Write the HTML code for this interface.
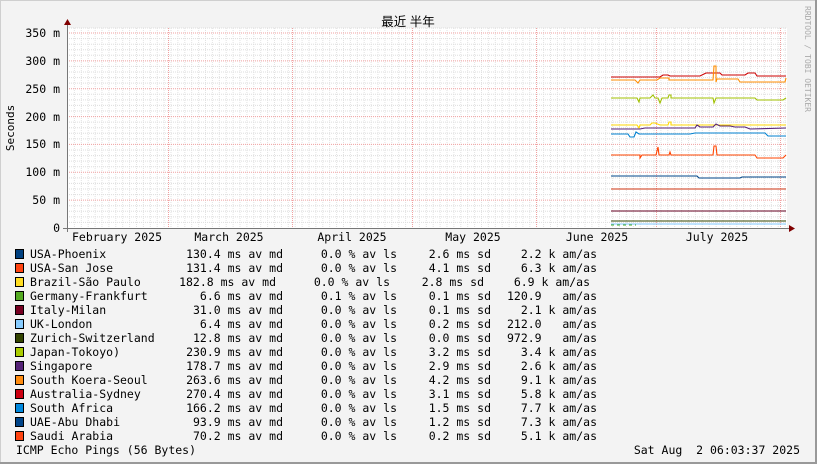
<!DOCTYPE html>
<html><head><meta charset="utf-8"><style>
html,body{margin:0;padding:0;background:#f3f3f3}
svg{display:block}
text{font-family:"DejaVu Sans Mono","Liberation Mono",monospace;font-size:11.5px;fill:#000}
</style></head><body>
<svg width="817" height="464" xmlns="http://www.w3.org/2000/svg">
<defs>
<pattern id="vg" x="67" y="0" width="6.9" height="464" patternUnits="userSpaceOnUse"><line x1="0.5" y1="0" x2="0.5" y2="464" stroke="#e2e2e2" stroke-width="1" stroke-dasharray="1,1"/></pattern>
</defs>
<rect x="0" y="0" width="817" height="464" fill="#f3f3f3"/>
<rect x="0.5" y="0.5" width="816" height="463" fill="none" stroke="#cfcfcf"/>
<line x1="816" y1="0" x2="816" y2="464" stroke="#999" stroke-width="2"/>
<line x1="0" y1="463" x2="817" y2="463" stroke="#999" stroke-width="2"/>
<rect x="67" y="28" width="720" height="200" fill="#fff"/>
<rect x="67" y="28" width="720" height="200" fill="url(#vg)"/>
<g stroke="#ddd" stroke-dasharray="1,1">
<line x1="67" y1="222.4" x2="787" y2="222.4"/><line x1="67" y1="216.9" x2="787" y2="216.9"/><line x1="67" y1="211.3" x2="787" y2="211.3"/><line x1="67" y1="205.7" x2="787" y2="205.7"/>
<line x1="67" y1="194.6" x2="787" y2="194.6"/><line x1="67" y1="189" x2="787" y2="189"/><line x1="67" y1="183.4" x2="787" y2="183.4"/><line x1="67" y1="177.9" x2="787" y2="177.9"/>
<line x1="67" y1="166.7" x2="787" y2="166.7"/><line x1="67" y1="161.1" x2="787" y2="161.1"/><line x1="67" y1="155.6" x2="787" y2="155.6"/><line x1="67" y1="150" x2="787" y2="150"/>
<line x1="67" y1="138.9" x2="787" y2="138.9"/><line x1="67" y1="133.3" x2="787" y2="133.3"/><line x1="67" y1="127.7" x2="787" y2="127.7"/><line x1="67" y1="122.1" x2="787" y2="122.1"/>
<line x1="67" y1="111" x2="787" y2="111"/><line x1="67" y1="105.4" x2="787" y2="105.4"/><line x1="67" y1="99.9" x2="787" y2="99.9"/><line x1="67" y1="94.3" x2="787" y2="94.3"/>
<line x1="67" y1="83.1" x2="787" y2="83.1"/><line x1="67" y1="77.6" x2="787" y2="77.6"/><line x1="67" y1="72" x2="787" y2="72"/><line x1="67" y1="66.4" x2="787" y2="66.4"/>
<line x1="67" y1="55.3" x2="787" y2="55.3"/><line x1="67" y1="49.7" x2="787" y2="49.7"/><line x1="67" y1="44.2" x2="787" y2="44.2"/><line x1="67" y1="38.6" x2="787" y2="38.6"/>
<line x1="67" y1="28" x2="787" y2="28"/>
</g>
<g stroke="#f0a0a0" stroke-dasharray="1,1">
<line x1="67" y1="200.1" x2="787" y2="200.1"/><line x1="67" y1="172.3" x2="787" y2="172.3"/><line x1="67" y1="144.4" x2="787" y2="144.4"/><line x1="67" y1="116.6" x2="787" y2="116.6"/><line x1="67" y1="88.7" x2="787" y2="88.7"/><line x1="67" y1="60.9" x2="787" y2="60.9"/><line x1="67" y1="33" x2="787" y2="33"/>
<line x1="168.5" y1="28" x2="168.5" y2="228"/><line x1="292.5" y1="28" x2="292.5" y2="228"/><line x1="412.5" y1="28" x2="412.5" y2="228"/><line x1="536.5" y1="28" x2="536.5" y2="228"/><line x1="656.5" y1="28" x2="656.5" y2="228"/><line x1="780.5" y1="28" x2="780.5" y2="228"/>
</g>
<g fill="none" stroke-width="1.1">
<polyline stroke="#cc0000" points="611,77 660,77 663,75 668,75 670,76 700,76 706,73 720,73 722,75 745,75 748,73 755,73 757,76 786,76"/>
<polyline stroke="#ff8c00" points="611,80 635,80 638,83 640,80 657,80 660,78 669,78 669,80 713,80 714,66 716,66 716,82 717,79 738,79 740,82 785,82 786,78"/>
<polyline stroke="#a0c000" points="611,98 637,98 639,102 640,98 650,98 653,95 655,98 658,98 660,103 662,98 668,98 669,95 671,95 671,98 713,98 714,103 716,98 755,98 757,100 783,100 786,98"/>
<polyline stroke="#ffd700" points="611,125 637,125 639,128 640,125 650,125 652,123 655,123 660,125 668,125 669,122 671,122 671,125 786,125"/>
<polyline stroke="#552277" points="611,129 640,129 645,128 695,128 697,125 700,127 713,127 716,124 720,126 730,126 735,127 745,127 750,129 786,128"/>
<polyline stroke="#0080d0" points="611,134 628,134 630,137 634,137 636,132 639,134 660,134 690,134 695,133 765,133 768,136 786,136"/>
<polyline stroke="#ff4400" points="611,155 640,155 640,158 642,155 656,155 658,147 659,155 669,155 670,152 671,155 713,155 714,146 716,146 717,155 755,155 757,158 783,158 786,155"/>
<polyline stroke="#004488" points="611,176 697,176 699,178 740,178 742,177 786,177"/>
<line x1="611" y1="189" x2="786" y2="189" stroke="#cc3311"/>
<line x1="611" y1="211" x2="786" y2="211" stroke="#660022"/>
<line x1="611" y1="221" x2="786" y2="221" stroke="#334400"/>
<line x1="611" y1="224" x2="786" y2="224" stroke="#80c8ff"/>
<line x1="611" y1="225" x2="636" y2="225" stroke="#44aa22" stroke-dasharray="3,3"/>
</g>
<line x1="67.5" y1="24" x2="67.5" y2="232" stroke="#777"/>
<line x1="63" y1="228.5" x2="791" y2="228.5" stroke="#777"/>
<polygon points="64,25 71,25 67.5,19" fill="#800000"/>
<polygon points="789,225 789,232 795,228.5" fill="#800000"/>
<g style="font-size:10px">
<text x="60" y="232" text-anchor="end">0</text>
<text x="60" y="204" text-anchor="end">50 m</text>
<text x="60" y="176" text-anchor="end">100 m</text>
<text x="60" y="148" text-anchor="end">150 m</text>
<text x="60" y="121" text-anchor="end">200 m</text>
<text x="60" y="93" text-anchor="end">250 m</text>
<text x="60" y="65" text-anchor="end">300 m</text>
<text x="60" y="37" text-anchor="end">350 m</text>
<text x="117" y="241" text-anchor="middle">February 2025</text>
<text x="229" y="241" text-anchor="middle">March 2025</text>
<text x="352" y="241" text-anchor="middle">April 2025</text>
<text x="473" y="241" text-anchor="middle">May 2025</text>
<text x="597" y="241" text-anchor="middle">June 2025</text>
<text x="717" y="241" text-anchor="middle">July 2025</text>
</g>
<text x="14" y="128" text-anchor="middle" transform="rotate(-90 14 128)" style="font-size:11px">Seconds</text>
<text x="408" y="26" text-anchor="middle" style='font-family:"Liberation Sans","Noto Sans CJK SC",sans-serif;font-size:12.5px'>最近 半年</text>
<text x="805" y="59" text-anchor="middle" transform="rotate(90 805 59)" style="font-size:8px;fill:#aaa">RRDTOOL / TOBI OETIKER</text>
<g stroke="#000" stroke-width="1">
<rect x="15.5" y="249.5" width="8" height="9" fill="#004080"/>
<rect x="15.5" y="263.5" width="8" height="9" fill="#ff4411"/>
<rect x="15.5" y="277.5" width="8" height="9" fill="#ffdd22"/>
<rect x="15.5" y="291.5" width="8" height="9" fill="#55aa22"/>
<rect x="15.5" y="305.5" width="8" height="9" fill="#770022"/>
<rect x="15.5" y="319.5" width="8" height="9" fill="#88ccff"/>
<rect x="15.5" y="333.5" width="8" height="9" fill="#334400"/>
<rect x="15.5" y="347.5" width="8" height="9" fill="#aacc00"/>
<rect x="15.5" y="361.5" width="8" height="9" fill="#552277"/>
<rect x="15.5" y="375.5" width="8" height="9" fill="#ff8c11"/>
<rect x="15.5" y="389.5" width="8" height="9" fill="#cc0011"/>
<rect x="15.5" y="403.5" width="8" height="9" fill="#0088dd"/>
<rect x="15.5" y="417.5" width="8" height="9" fill="#004488"/>
<rect x="15.5" y="431.5" width="8" height="9" fill="#ff4411"/>
</g>
<g>
<text x="30" y="258">USA-Phoenix</text><text x="283" y="258" text-anchor="end">130.4 ms av md</text><text x="397" y="258" text-anchor="end">0.0 % av ls</text><text x="491" y="258" text-anchor="end">2.6 ms sd</text><text x="597" y="258" text-anchor="end">2.2 k am/as</text>
<text x="30" y="272">USA-San Jose</text><text x="283" y="272" text-anchor="end">131.4 ms av md</text><text x="397" y="272" text-anchor="end">0.0 % av ls</text><text x="491" y="272" text-anchor="end">4.1 ms sd</text><text x="597" y="272" text-anchor="end">6.3 k am/as</text>
<text x="30" y="286">Brazil-São Paulo</text><text x="276" y="286" text-anchor="end">182.8 ms av md</text><text x="390" y="286" text-anchor="end">0.0 % av ls</text><text x="484" y="286" text-anchor="end">2.8 ms sd</text><text x="590" y="286" text-anchor="end">6.9 k am/as</text>
<text x="30" y="300">Germany-Frankfurt</text><text x="283" y="300" text-anchor="end">6.6 ms av md</text><text x="397" y="300" text-anchor="end">0.1 % av ls</text><text x="491" y="300" text-anchor="end">0.1 ms sd</text><text x="597" y="300" text-anchor="end" xml:space="preserve">120.9   am/as</text>
<text x="30" y="314">Italy-Milan</text><text x="283" y="314" text-anchor="end">31.0 ms av md</text><text x="397" y="314" text-anchor="end">0.0 % av ls</text><text x="491" y="314" text-anchor="end">0.1 ms sd</text><text x="597" y="314" text-anchor="end">2.1 k am/as</text>
<text x="30" y="328">UK-London</text><text x="283" y="328" text-anchor="end">6.4 ms av md</text><text x="397" y="328" text-anchor="end">0.0 % av ls</text><text x="491" y="328" text-anchor="end">0.2 ms sd</text><text x="597" y="328" text-anchor="end" xml:space="preserve">212.0   am/as</text>
<text x="30" y="342">Zurich-Switzerland</text><text x="283" y="342" text-anchor="end">12.8 ms av md</text><text x="397" y="342" text-anchor="end">0.0 % av ls</text><text x="491" y="342" text-anchor="end">0.0 ms sd</text><text x="597" y="342" text-anchor="end" xml:space="preserve">972.9   am/as</text>
<text x="30" y="356">Japan-Tokoyo)</text><text x="283" y="356" text-anchor="end">230.9 ms av md</text><text x="397" y="356" text-anchor="end">0.0 % av ls</text><text x="491" y="356" text-anchor="end">3.2 ms sd</text><text x="597" y="356" text-anchor="end">3.4 k am/as</text>
<text x="30" y="370">Singapore</text><text x="283" y="370" text-anchor="end">178.7 ms av md</text><text x="397" y="370" text-anchor="end">0.0 % av ls</text><text x="491" y="370" text-anchor="end">2.9 ms sd</text><text x="597" y="370" text-anchor="end">2.6 k am/as</text>
<text x="30" y="384">South Koera-Seoul</text><text x="283" y="384" text-anchor="end">263.6 ms av md</text><text x="397" y="384" text-anchor="end">0.0 % av ls</text><text x="491" y="384" text-anchor="end">4.2 ms sd</text><text x="597" y="384" text-anchor="end">9.1 k am/as</text>
<text x="30" y="398">Australia-Sydney</text><text x="283" y="398" text-anchor="end">270.4 ms av md</text><text x="397" y="398" text-anchor="end">0.0 % av ls</text><text x="491" y="398" text-anchor="end">3.1 ms sd</text><text x="597" y="398" text-anchor="end">5.8 k am/as</text>
<text x="30" y="412">South Africa</text><text x="283" y="412" text-anchor="end">166.2 ms av md</text><text x="397" y="412" text-anchor="end">0.0 % av ls</text><text x="491" y="412" text-anchor="end">1.5 ms sd</text><text x="597" y="412" text-anchor="end">7.7 k am/as</text>
<text x="30" y="426">UAE-Abu Dhabi</text><text x="283" y="426" text-anchor="end">93.9 ms av md</text><text x="397" y="426" text-anchor="end">0.0 % av ls</text><text x="491" y="426" text-anchor="end">1.2 ms sd</text><text x="597" y="426" text-anchor="end">7.3 k am/as</text>
<text x="30" y="440">Saudi Arabia</text><text x="283" y="440" text-anchor="end">70.2 ms av md</text><text x="397" y="440" text-anchor="end">0.0 % av ls</text><text x="491" y="440" text-anchor="end">0.2 ms sd</text><text x="597" y="440" text-anchor="end">5.1 k am/as</text>
<text x="16" y="454">ICMP Echo Pings (56 Bytes)</text>
<text x="800" y="454" text-anchor="end" xml:space="preserve">Sat Aug  2 06:03:37 2025</text>
</g>
</svg>
</body></html>
